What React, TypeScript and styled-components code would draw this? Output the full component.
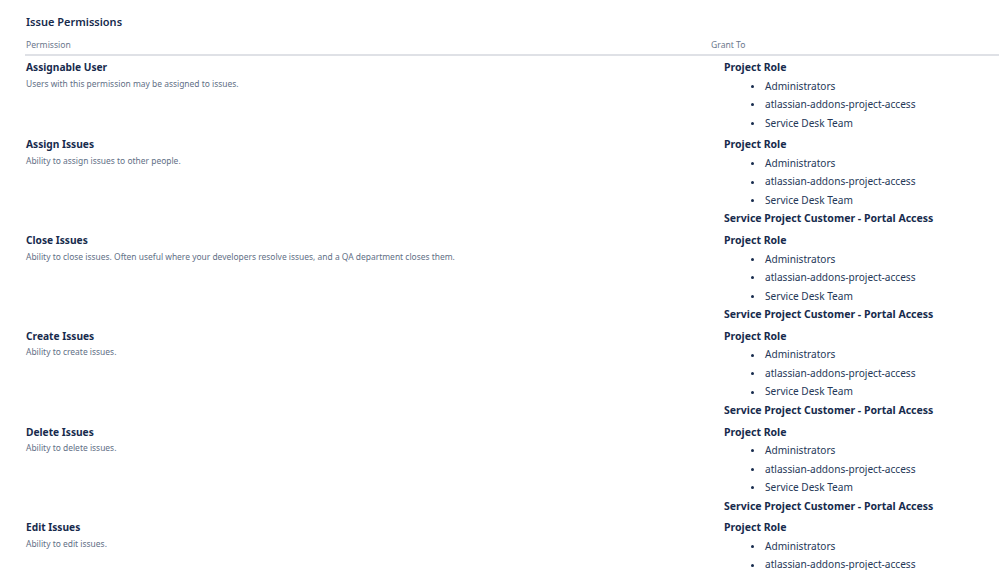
import React from "react";
import styled, { createGlobalStyle } from "styled-components";

const GlobalStyle = createGlobalStyle`
  html, body {
    margin: 0;
    padding: 0;
    background: #ffffff;
  }
  body {
    font-family: "Noto Sans", "Open Sans", sans-serif;
    color: #172b4d;
  }
`;

const Page = styled.div`
  padding: 12px 0 0 25px;
  overflow: hidden;
  height: 570px;
  box-sizing: border-box;
`;

const Title = styled.h2`
  margin: 0 0 5px 1px;
  font-size: 11px;
  line-height: 20px;
  font-weight: 600;
  color: #172b4d;
`;

const Table = styled.div`
  display: grid;
  grid-template-columns: 685px 1fr;
`;

const HeadCell = styled.div`
  font-size: 8.6px;
  line-height: 16px;
  color: #6b778c;
  padding: 0 0 1px 1px;
  border-bottom: 2px solid #dfe1e6;
`;

const PermCell = styled.div`
  padding: 2px 0 1.25px 1px;
`;

const PermName = styled.div`
  font-size: 10.2px;
  font-weight: 700;
  line-height: 18.5px;
  color: #172b4d;
`;

const PermDesc = styled.div`
  font-size: 8.45px;
  line-height: 13px;
  color: #626f86;
`;

const GrantCell = styled.div`
  padding: 2px 0 1.25px 14px;
`;

const GrantType = styled.div`
  font-size: 10.5px;
  font-weight: 700;
  line-height: 18.5px;
  color: #172b4d;
`;

const GrantList = styled.ul`
  margin: 0;
  padding: 0 0 0 26px;
  list-style: none;
`;

const GrantItem = styled.li`
  display: flex;
  align-items: center;
  font-size: 10.1px;
  line-height: 18.5px;
  color: #253858;

  &::before {
    content: "";
    flex: 0 0 auto;
    width: 3px;
    height: 3px;
    border-radius: 50%;
    background: #172b4d;
    margin: 1px 11px 0 1px;
  }
`;

type Perm = { name: string; desc: string; portal: boolean };

const perms: Perm[] = [
  { name: "Assignable User", desc: "Users with this permission may be assigned to issues.", portal: false },
  { name: "Assign Issues", desc: "Ability to assign issues to other people.", portal: true },
  {
    name: "Close Issues",
    desc: "Ability to close issues. Often useful where your developers resolve issues, and a QA department closes them.",
    portal: true,
  },
  { name: "Create Issues", desc: "Ability to create issues.", portal: true },
  { name: "Delete Issues", desc: "Ability to delete issues.", portal: true },
  { name: "Edit Issues", desc: "Ability to edit issues.", portal: true },
];

const roles = ["Administrators", "atlassian-addons-project-access", "Service Desk Team"];

export default function App() {
  return (
    <>
      <GlobalStyle />
      <Page>
        <Title>Issue Permissions</Title>
        <Table>
          <HeadCell>Permission</HeadCell>
          <HeadCell>Grant To</HeadCell>
          {perms.map((p) => (
            <React.Fragment key={p.name}>
              <PermCell>
                <PermName>{p.name}</PermName>
                <PermDesc>{p.desc}</PermDesc>
              </PermCell>
              <GrantCell>
                <GrantType>Project Role</GrantType>
                <GrantList>
                  {roles.map((r) => (
                    <GrantItem key={r}>{r}</GrantItem>
                  ))}
                </GrantList>
                {p.portal && <GrantType>Service Project Customer - Portal Access</GrantType>}
              </GrantCell>
            </React.Fragment>
          ))}
        </Table>
      </Page>
    </>
  );
}
